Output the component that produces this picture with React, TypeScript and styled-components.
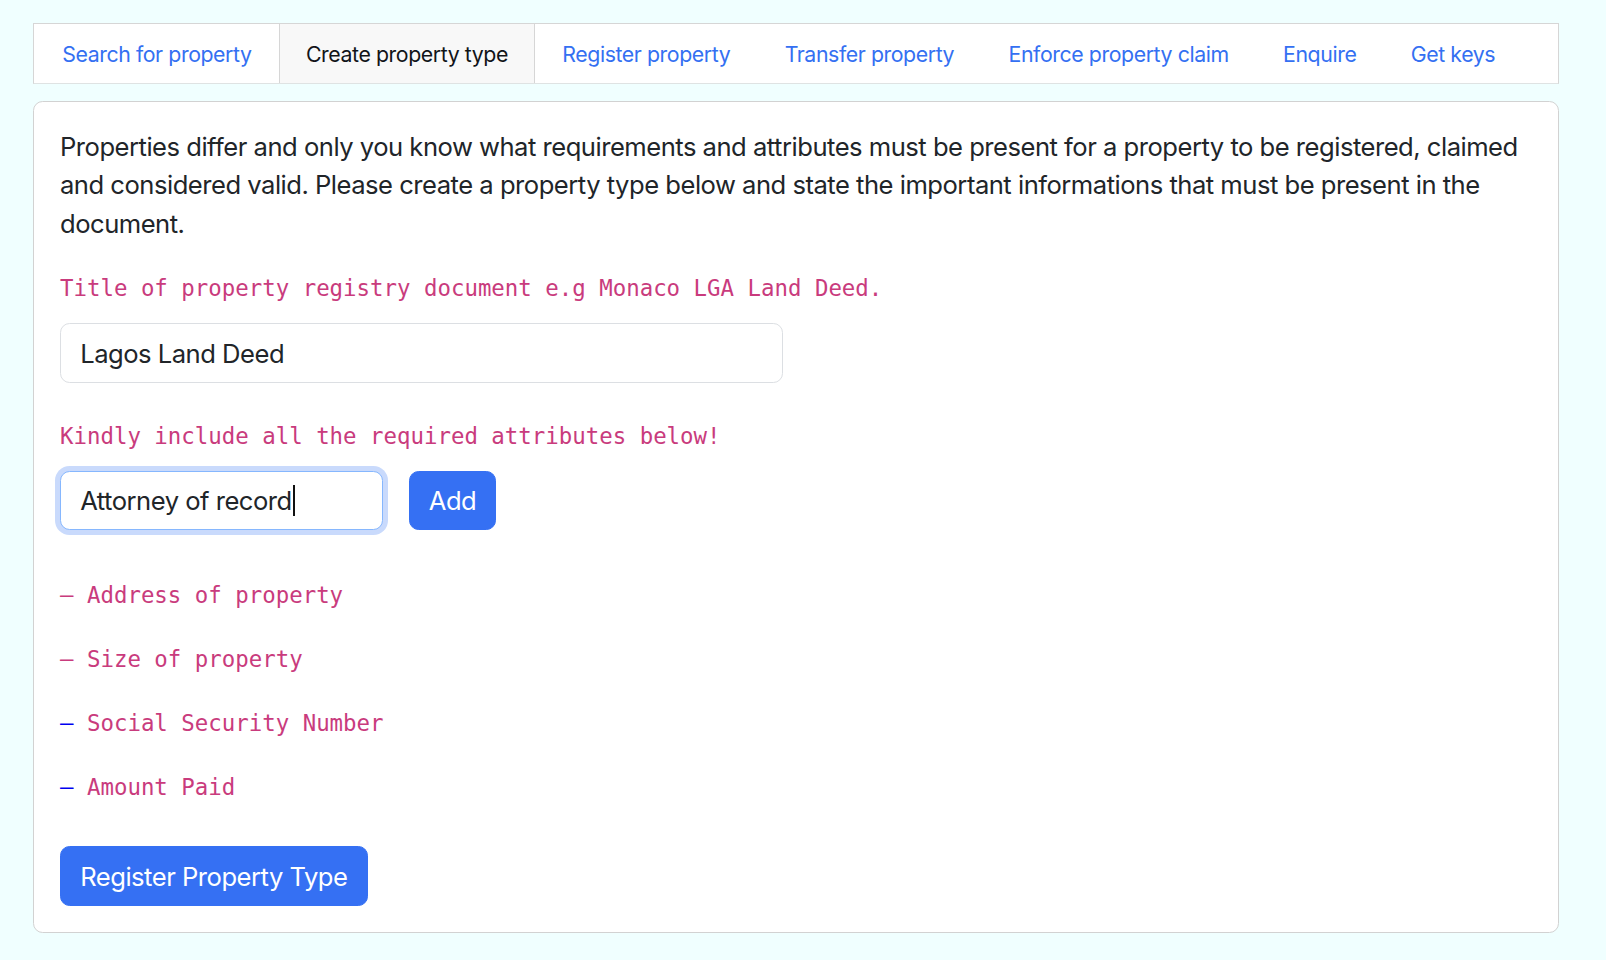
import React from "react";
import styled, { createGlobalStyle } from "styled-components";

const GlobalStyle = createGlobalStyle`
  html, body { margin: 0; padding: 0; }
  body {
    background: #f0ffff;
    font-family: Inter, "Liberation Sans", Arial, sans-serif;
    color: #212529;
  }
  * { box-sizing: border-box; }
`;

const Page = styled.div`
  display: flex;
  flex-direction: column;
  gap: 17px;
  width: 1526px;
  margin-left: 33px;
  padding-top: 23px;
  padding-bottom: 27px;
`;

const TabBar = styled.nav`
  display: flex;
  align-items: stretch;
  height: 61px;
  padding-left: 1px;
  background: #ffffff;
  border: 1px solid #d6d6d6;
  border-bottom-color: #dfe3e3;
`;

const Tab = styled.a<{ $active?: boolean }>`
  display: flex;
  align-items: center;
  flex-shrink: 0;
  white-space: nowrap;
  padding: 0 26.2px;
  font-size: 21.3px;
  letter-spacing: -0.42px;
  text-decoration: none;
  cursor: pointer;
  color: ${(p) => (p.$active ? "#111418" : "#3470f2")};
  background: ${(p) => (p.$active ? "#f8f8f8" : "transparent")};
  border-left: 1px solid ${(p) => (p.$active ? "#d6d6d6" : "transparent")};
  border-right: 1px solid ${(p) => (p.$active ? "#d6d6d6" : "transparent")};
`;

const Card = styled.section`
  background: #ffffff;
  border: 1px solid #d2d2d2;
  border-radius: 9.6px;
  padding: 26px 26px 26px 26px;
  display: flex;
  flex-direction: column;
  align-items: flex-start;
`;

const Lead = styled.p`
  margin: 0 0 25.6px;
  font-size: 25.6px;
  line-height: 38.4px;
  letter-spacing: -0.5px;
  color: #212529;
`;

const CodeLine = styled.p<{ $gap: number }>`
  margin: 0 0 ${(p) => p.$gap}px;
  height: 38.4px;
  line-height: 38.4px;
  font-family: "DejaVu Sans Mono", "Liberation Mono", monospace;
  font-size: 22.4px;
  white-space: pre;
`;

const Code = styled.code<{ $tone?: "pink" | "blue" }>`
  font-family: inherit;
  font-size: inherit;
  color: ${(p) => (p.$tone === "blue" ? "#0000f0" : "#c93b7d")};
`;

const TextInput = styled.input<{ $width: number }>`
  display: block;
  width: ${(p) => p.$width}px;
  height: 59.6px;
  padding: 0 19.2px;
  border: 1px solid #dcdfe3;
  border-radius: 9.6px;
  background: #ffffff;
  font-family: inherit;
  font-size: 25.6px;
  letter-spacing: -0.5px;
  color: #212529;
  outline: none;
`;

const FieldGroup = styled.div<{ $top: number }>`
  margin-top: ${(p) => p.$top}px;
  display: flex;
  flex-direction: column;
  align-items: flex-start;
`;

const AttributeRow = styled.div`
  display: flex;
  align-items: center;
  gap: 26px;
  margin-bottom: 46px;
`;

const FocusedField = styled.div`
  width: 322.6px;
  height: 59.6px;
  padding: 0 19.2px;
  border: 1px solid #86b7fe;
  border-radius: 9.6px;
  box-shadow: 0 0 0 5px #c9dafc;
  background: #ffffff;
  display: flex;
  align-items: center;
  font-size: 25.6px;
  letter-spacing: -0.5px;
  color: #212529;
  white-space: nowrap;
`;

const Caret = styled.span`
  display: inline-block;
  width: 2px;
  height: 31px;
  margin-left: 1px;
  background: #111;
`;

const Button = styled.button<{ $top?: number }>`
  display: block;
  margin-top: ${(p) => p.$top ?? 0}px;
  height: 59.6px;
  padding: 0 19.2px;
  border: 1px solid #3570f3;
  border-radius: 9.6px;
  background: #3570f3;
  color: #ffffff;
  font-family: inherit;
  font-size: 25.6px;
  letter-spacing: -0.5px;
  cursor: pointer;
`;

const AttrList = styled.div`
  display: flex;
  flex-direction: column;
`;

const tabs = [
  "Search for property",
  "Create property type",
  "Register property",
  "Transfer property",
  "Enforce property claim",
  "Enquire",
  "Get keys",
];

const attributes: { label: string; dash: "pink" | "blue" }[] = [
  { label: "Address of property", dash: "pink" },
  { label: "Size of property", dash: "pink" },
  { label: "Social Security Number", dash: "blue" },
  { label: "Amount Paid", dash: "blue" },
];

export default function App() {
  return (
    <>
      <GlobalStyle />
      <Page>
        <TabBar>
          {tabs.map((t) => (
            <Tab key={t} $active={t === "Create property type"}>
              {t}
            </Tab>
          ))}
        </TabBar>
        <Card>
          <Lead>
            Properties differ and only you know what requirements and attributes must be
            present for a property to be registered, claimed and considered valid. Please
            create a property type below and state the important informations that must be
            present in the document.
          </Lead>
          <CodeLine $gap={16}>
            <Code>Title of property registry document e.g Monaco LGA Land Deed.</Code>
          </CodeLine>
          <TextInput $width={723} readOnly value="Lagos Land Deed" />
          <FieldGroup $top={34}>
            <CodeLine $gap={15.5}>
              <Code>Kindly include all the required attributes below!</Code>
            </CodeLine>
            <AttributeRow>
              <FocusedField>
                Attorney of record
                <Caret />
              </FocusedField>
              <Button>Add</Button>
            </AttributeRow>
            <AttrList>
              {attributes.map((a) => (
                <CodeLine key={a.label} $gap={25.6}>
                  <Code $tone={a.dash}>– </Code>
                  <Code>{a.label}</Code>
                </CodeLine>
              ))}
            </AttrList>
          </FieldGroup>
          <Button $top={14}>Register Property Type</Button>
        </Card>
      </Page>
    </>
  );
}
